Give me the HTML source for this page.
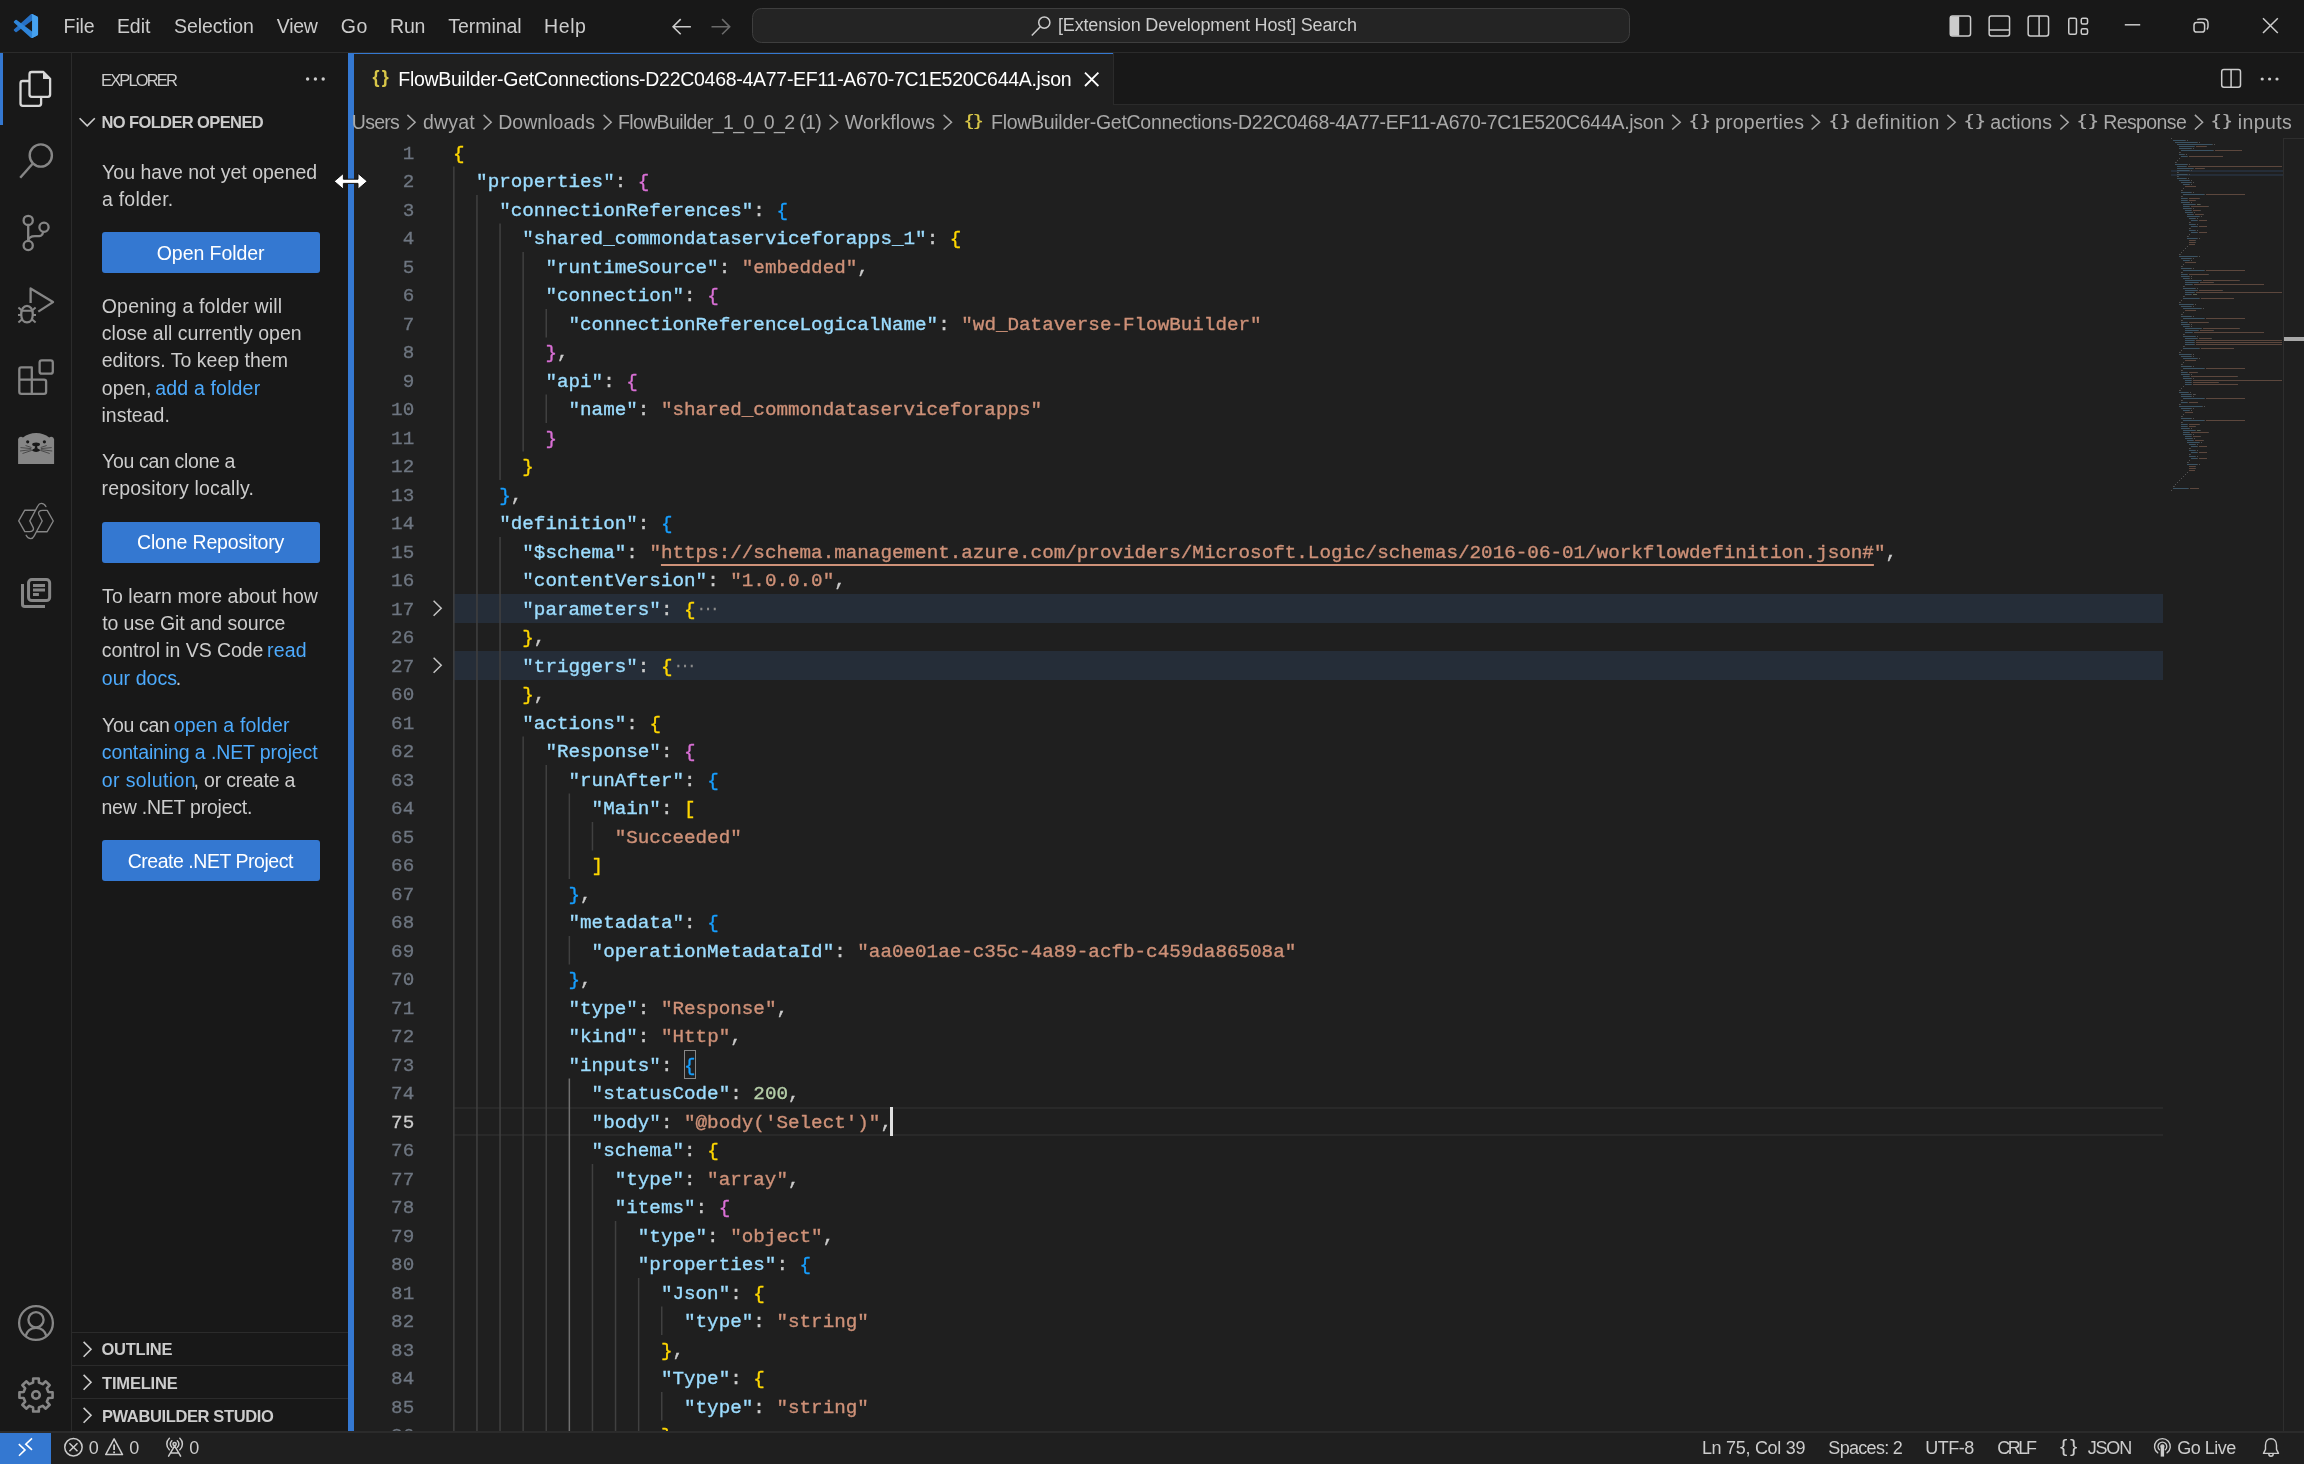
<!DOCTYPE html>
<html lang="en"><head><meta charset="utf-8"><title>FlowBuilder-GetConnections - Visual Studio Code</title>
<style>
html,body{margin:0;padding:0;}
body{width:2304px;height:1464px;overflow:hidden;background:#1f1f1f;position:relative;font-family:'Liberation Sans', sans-serif;}
#app{position:absolute;left:0;top:0;width:2304px;height:1464px;overflow:hidden;will-change:transform;}
#app>div,#app>span,#app>svg{position:absolute;}
#app>span{white-space:pre;}
#ed>div,#ed>span{position:absolute;}
#mm>i{position:absolute;display:block;height:1.2px;}
#ed>span{white-space:pre;font:400 19.25px/28.5px 'Liberation Mono', monospace;-webkit-text-stroke:0.36px currentColor;}
#ed .ln{left:354px;width:60.2px;text-align:right;-webkit-text-stroke:0.3px currentColor;}
#ed .u{color:#ce9178;text-decoration:underline;text-decoration-thickness:1.5px;text-underline-offset:6px;}
#ed .fd{color:#8a8a8a;font:19.5px/1 'DejaVu Sans', sans-serif;margin-left:2.7px;-webkit-text-stroke:0;}
</style></head>
<body><div id="app">
<div style="left:0px;top:0px;width:2304px;height:52px;background:#181818;"></div>
<div style="left:0px;top:52px;width:2304px;height:1px;background:#2b2b2b;"></div>
<div style="left:0px;top:53px;width:72px;height:1378px;background:#181818;"></div>
<div style="left:71px;top:53px;width:1px;height:1378px;background:#2b2b2b;"></div>
<div style="left:72px;top:53px;width:276px;height:1378px;background:#181818;"></div>
<div style="left:354px;top:53px;width:1950px;height:52px;background:#181818;"></div>
<div style="left:354px;top:104px;width:1950px;height:1px;background:#2b2b2b;"></div>
<div style="left:0px;top:1431px;width:2304px;height:33px;background:#1f1f1f;"></div>
<div style="left:0px;top:1431px;width:2304px;height:2px;background:#2b2b2b;"></div>
<div style="left:752px;top:8px;width:878px;height:35px;box-sizing:border-box;background:#242424;border:1px solid #3e3e3e;border-radius:9.5px;"></div>
<div style="left:0px;top:53px;width:3px;height:72px;background:#3478d1;"></div>
<div style="left:102px;top:232px;width:218px;height:41px;background:#3478d1;border-radius:3px;"></div>
<div style="left:102px;top:522px;width:218px;height:41px;background:#3478d1;border-radius:3px;"></div>
<div style="left:102px;top:840px;width:218px;height:41px;background:#3478d1;border-radius:3px;"></div>
<div style="left:72px;top:1332px;width:276px;height:1px;background:#2b2b2b;"></div>
<div style="left:72px;top:1365px;width:276px;height:1px;background:#2b2b2b;"></div>
<div style="left:72px;top:1398px;width:276px;height:1px;background:#2b2b2b;"></div>
<div style="left:348px;top:53px;width:6px;height:1378px;background:#3478d1;"></div>
<div style="left:354px;top:53px;width:760px;height:52px;background:#1f1f1f;"></div>
<div style="left:1113px;top:53px;width:1px;height:52px;background:#2b2b2b;"></div>
<div style="left:354px;top:53px;width:759px;height:1px;background:#3478d1;"></div>
<div id="ed" style="left:0;top:138px;width:2304px;height:1293px;overflow:hidden;"><span class="ln" style="top:1.75px;color:#6e7681">1</span><span class="cl" style="left:453.00px;top:1.75px"><span style="color:#ffd700">{</span></span><span class="ln" style="top:30.25px;color:#6e7681">2</span><span class="cl" style="left:476.10px;top:30.25px"><span style="color:#9cdcfe">"properties"</span><span style="color:#cccccc">: </span><span style="color:#da70d6">{</span></span><span class="ln" style="top:58.75px;color:#6e7681">3</span><span class="cl" style="left:499.20px;top:58.75px"><span style="color:#9cdcfe">"connectionReferences"</span><span style="color:#cccccc">: </span><span style="color:#179fff">{</span></span><span class="ln" style="top:87.25px;color:#6e7681">4</span><span class="cl" style="left:522.30px;top:87.25px"><span style="color:#9cdcfe">"shared_commondataserviceforapps_1"</span><span style="color:#cccccc">: </span><span style="color:#ffd700">{</span></span><span class="ln" style="top:115.75px;color:#6e7681">5</span><span class="cl" style="left:545.40px;top:115.75px"><span style="color:#9cdcfe">"runtimeSource"</span><span style="color:#cccccc">: </span><span style="color:#ce9178">"embedded"</span><span style="color:#cccccc">,</span></span><span class="ln" style="top:144.25px;color:#6e7681">6</span><span class="cl" style="left:545.40px;top:144.25px"><span style="color:#9cdcfe">"connection"</span><span style="color:#cccccc">: </span><span style="color:#da70d6">{</span></span><span class="ln" style="top:172.75px;color:#6e7681">7</span><span class="cl" style="left:568.50px;top:172.75px"><span style="color:#9cdcfe">"connectionReferenceLogicalName"</span><span style="color:#cccccc">: </span><span style="color:#ce9178">"wd_Dataverse-FlowBuilder"</span></span><span class="ln" style="top:201.25px;color:#6e7681">8</span><span class="cl" style="left:545.40px;top:201.25px"><span style="color:#da70d6">}</span><span style="color:#cccccc">,</span></span><span class="ln" style="top:229.75px;color:#6e7681">9</span><span class="cl" style="left:545.40px;top:229.75px"><span style="color:#9cdcfe">"api"</span><span style="color:#cccccc">: </span><span style="color:#da70d6">{</span></span><span class="ln" style="top:258.25px;color:#6e7681">10</span><span class="cl" style="left:568.50px;top:258.25px"><span style="color:#9cdcfe">"name"</span><span style="color:#cccccc">: </span><span style="color:#ce9178">"shared_commondataserviceforapps"</span></span><span class="ln" style="top:286.75px;color:#6e7681">11</span><span class="cl" style="left:545.40px;top:286.75px"><span style="color:#da70d6">}</span></span><span class="ln" style="top:315.25px;color:#6e7681">12</span><span class="cl" style="left:522.30px;top:315.25px"><span style="color:#ffd700">}</span></span><span class="ln" style="top:343.75px;color:#6e7681">13</span><span class="cl" style="left:499.20px;top:343.75px"><span style="color:#179fff">}</span><span style="color:#cccccc">,</span></span><span class="ln" style="top:372.25px;color:#6e7681">14</span><span class="cl" style="left:499.20px;top:372.25px"><span style="color:#9cdcfe">"definition"</span><span style="color:#cccccc">: </span><span style="color:#179fff">{</span></span><span class="ln" style="top:400.75px;color:#6e7681">15</span><span class="cl" style="left:522.30px;top:400.75px"><span style="color:#9cdcfe">"$schema"</span><span style="color:#cccccc">: </span><span style="color:#ce9178">"</span><span class="u">https://schema.management.azure.com/providers/Microsoft.Logic/schemas/2016-06-01/workflowdefinition.json#</span><span style="color:#ce9178">"</span><span style="color:#cccccc">,</span></span><span class="ln" style="top:429.25px;color:#6e7681">16</span><span class="cl" style="left:522.30px;top:429.25px"><span style="color:#9cdcfe">"contentVersion"</span><span style="color:#cccccc">: </span><span style="color:#ce9178">"1.0.0.0"</span><span style="color:#cccccc">,</span></span><div style="left:453px;top:456px;width:1710px;height:28.5px;background:#252d38;"></div><span class="ln" style="top:457.75px;color:#6e7681">17</span><span class="cl" style="left:522.30px;top:457.75px"><span style="color:#9cdcfe">"parameters"</span><span style="color:#cccccc">: </span><span style="color:#ffd700">{</span><span class="fd">⋯</span></span><span class="ln" style="top:486.25px;color:#6e7681">26</span><span class="cl" style="left:522.30px;top:486.25px"><span style="color:#ffd700">}</span><span style="color:#cccccc">,</span></span><div style="left:453px;top:513px;width:1710px;height:28.5px;background:#252d38;"></div><span class="ln" style="top:514.75px;color:#6e7681">27</span><span class="cl" style="left:522.30px;top:514.75px"><span style="color:#9cdcfe">"triggers"</span><span style="color:#cccccc">: </span><span style="color:#ffd700">{</span><span class="fd">⋯</span></span><span class="ln" style="top:543.25px;color:#6e7681">60</span><span class="cl" style="left:522.30px;top:543.25px"><span style="color:#ffd700">}</span><span style="color:#cccccc">,</span></span><span class="ln" style="top:571.75px;color:#6e7681">61</span><span class="cl" style="left:522.30px;top:571.75px"><span style="color:#9cdcfe">"actions"</span><span style="color:#cccccc">: </span><span style="color:#ffd700">{</span></span><span class="ln" style="top:600.25px;color:#6e7681">62</span><span class="cl" style="left:545.40px;top:600.25px"><span style="color:#9cdcfe">"Response"</span><span style="color:#cccccc">: </span><span style="color:#da70d6">{</span></span><span class="ln" style="top:628.75px;color:#6e7681">63</span><span class="cl" style="left:568.50px;top:628.75px"><span style="color:#9cdcfe">"runAfter"</span><span style="color:#cccccc">: </span><span style="color:#179fff">{</span></span><span class="ln" style="top:657.25px;color:#6e7681">64</span><span class="cl" style="left:591.60px;top:657.25px"><span style="color:#9cdcfe">"Main"</span><span style="color:#cccccc">: </span><span style="color:#ffd700">[</span></span><span class="ln" style="top:685.75px;color:#6e7681">65</span><span class="cl" style="left:614.70px;top:685.75px"><span style="color:#ce9178">"Succeeded"</span></span><span class="ln" style="top:714.25px;color:#6e7681">66</span><span class="cl" style="left:591.60px;top:714.25px"><span style="color:#ffd700">]</span></span><span class="ln" style="top:742.75px;color:#6e7681">67</span><span class="cl" style="left:568.50px;top:742.75px"><span style="color:#179fff">}</span><span style="color:#cccccc">,</span></span><span class="ln" style="top:771.25px;color:#6e7681">68</span><span class="cl" style="left:568.50px;top:771.25px"><span style="color:#9cdcfe">"metadata"</span><span style="color:#cccccc">: </span><span style="color:#179fff">{</span></span><span class="ln" style="top:799.75px;color:#6e7681">69</span><span class="cl" style="left:591.60px;top:799.75px"><span style="color:#9cdcfe">"operationMetadataId"</span><span style="color:#cccccc">: </span><span style="color:#ce9178">"aa0e01ae-c35c-4a89-acfb-c459da86508a"</span></span><span class="ln" style="top:828.25px;color:#6e7681">70</span><span class="cl" style="left:568.50px;top:828.25px"><span style="color:#179fff">}</span><span style="color:#cccccc">,</span></span><span class="ln" style="top:856.75px;color:#6e7681">71</span><span class="cl" style="left:568.50px;top:856.75px"><span style="color:#9cdcfe">"type"</span><span style="color:#cccccc">: </span><span style="color:#ce9178">"Response"</span><span style="color:#cccccc">,</span></span><span class="ln" style="top:885.25px;color:#6e7681">72</span><span class="cl" style="left:568.50px;top:885.25px"><span style="color:#9cdcfe">"kind"</span><span style="color:#cccccc">: </span><span style="color:#ce9178">"Http"</span><span style="color:#cccccc">,</span></span><span class="ln" style="top:913.75px;color:#6e7681">73</span><span class="cl" style="left:568.50px;top:913.75px"><span style="color:#9cdcfe">"inputs"</span><span style="color:#cccccc">: </span><span style="color:#179fff">{</span></span><span class="ln" style="top:942.25px;color:#6e7681">74</span><span class="cl" style="left:591.60px;top:942.25px"><span style="color:#9cdcfe">"statusCode"</span><span style="color:#cccccc">: </span><span style="color:#b5cea8">200</span><span style="color:#cccccc">,</span></span><div style="left:453px;top:969px;width:1710px;height:28.5px;box-sizing:border-box;border-top:2.7px solid #292929;border-bottom:2.7px solid #292929;"></div><span class="ln" style="top:970.75px;color:#cccccc">75</span><span class="cl" style="left:591.60px;top:970.75px"><span style="color:#9cdcfe">"body"</span><span style="color:#cccccc">: </span><span style="color:#ce9178">"@body('Select')"</span><span style="color:#cccccc">,</span></span><span class="ln" style="top:999.25px;color:#6e7681">76</span><span class="cl" style="left:591.60px;top:999.25px"><span style="color:#9cdcfe">"schema"</span><span style="color:#cccccc">: </span><span style="color:#ffd700">{</span></span><span class="ln" style="top:1027.75px;color:#6e7681">77</span><span class="cl" style="left:614.70px;top:1027.75px"><span style="color:#9cdcfe">"type"</span><span style="color:#cccccc">: </span><span style="color:#ce9178">"array"</span><span style="color:#cccccc">,</span></span><span class="ln" style="top:1056.25px;color:#6e7681">78</span><span class="cl" style="left:614.70px;top:1056.25px"><span style="color:#9cdcfe">"items"</span><span style="color:#cccccc">: </span><span style="color:#da70d6">{</span></span><span class="ln" style="top:1084.75px;color:#6e7681">79</span><span class="cl" style="left:637.80px;top:1084.75px"><span style="color:#9cdcfe">"type"</span><span style="color:#cccccc">: </span><span style="color:#ce9178">"object"</span><span style="color:#cccccc">,</span></span><span class="ln" style="top:1113.25px;color:#6e7681">80</span><span class="cl" style="left:637.80px;top:1113.25px"><span style="color:#9cdcfe">"properties"</span><span style="color:#cccccc">: </span><span style="color:#179fff">{</span></span><span class="ln" style="top:1141.75px;color:#6e7681">81</span><span class="cl" style="left:660.90px;top:1141.75px"><span style="color:#9cdcfe">"Json"</span><span style="color:#cccccc">: </span><span style="color:#ffd700">{</span></span><span class="ln" style="top:1170.25px;color:#6e7681">82</span><span class="cl" style="left:684.00px;top:1170.25px"><span style="color:#9cdcfe">"type"</span><span style="color:#cccccc">: </span><span style="color:#ce9178">"string"</span></span><span class="ln" style="top:1198.75px;color:#6e7681">83</span><span class="cl" style="left:660.90px;top:1198.75px"><span style="color:#ffd700">}</span><span style="color:#cccccc">,</span></span><span class="ln" style="top:1227.25px;color:#6e7681">84</span><span class="cl" style="left:660.90px;top:1227.25px"><span style="color:#9cdcfe">"Type"</span><span style="color:#cccccc">: </span><span style="color:#ffd700">{</span></span><span class="ln" style="top:1255.75px;color:#6e7681">85</span><span class="cl" style="left:684.00px;top:1255.75px"><span style="color:#9cdcfe">"type"</span><span style="color:#cccccc">: </span><span style="color:#ce9178">"string"</span></span><span class="ln" style="top:1284.25px;color:#6e7681">86</span><span class="cl" style="left:660.90px;top:1284.25px"><span style="color:#ffd700">}</span><span style="color:#cccccc">,</span></span><div style="left:683.70px;top:912.00px;width:11.95px;height:28.5px;box-sizing:border-box;border:1.5px solid #888888;"></div><div style="left:890.20px;top:969.00px;width:3px;height:28.5px;background:#e0e0e0;"></div></div>
<div style="left:2283px;top:138px;width:1.2px;height:1293px;background:#2e2e2e;"></div>
<div style="left:2283px;top:138px;width:21px;height:1.2px;background:#2e2e2e;"></div>
<div style="left:2284px;top:337px;width:20px;height:3.5px;background:#a8a8a8;"></div>
<div id="mm" style="left:2170.6px;top:138px;width:112.4px;height:356px;overflow:hidden;"><i style="left:0.0px;top:0.3px;width:1.0px;background:#505050"></i><i style="left:2.0px;top:2.3px;width:12.2px;background:#3b5363"></i><i style="left:14.3px;top:2.3px;width:1.0px;background:#444444"></i><i style="left:16.3px;top:2.3px;width:1.0px;background:#505050"></i><i style="left:4.1px;top:4.3px;width:22.4px;background:#3b5363"></i><i style="left:26.5px;top:4.3px;width:1.0px;background:#444444"></i><i style="left:28.6px;top:4.3px;width:1.0px;background:#505050"></i><i style="left:6.1px;top:6.3px;width:35.7px;background:#3b5363"></i><i style="left:41.8px;top:6.3px;width:1.0px;background:#444444"></i><i style="left:43.9px;top:6.3px;width:1.0px;background:#505050"></i><i style="left:8.2px;top:8.3px;width:15.3px;background:#3b5363"></i><i style="left:23.5px;top:8.3px;width:1.0px;background:#444444"></i><i style="left:25.5px;top:8.3px;width:10.2px;background:#5c473d"></i><i style="left:35.7px;top:8.3px;width:1.0px;background:#444444"></i><i style="left:8.2px;top:10.3px;width:12.2px;background:#3b5363"></i><i style="left:20.4px;top:10.3px;width:1.0px;background:#444444"></i><i style="left:22.4px;top:10.3px;width:1.0px;background:#505050"></i><i style="left:10.2px;top:12.3px;width:32.6px;background:#3b5363"></i><i style="left:42.8px;top:12.3px;width:1.0px;background:#444444"></i><i style="left:44.9px;top:12.3px;width:26.5px;background:#5c473d"></i><i style="left:8.2px;top:14.3px;width:1.0px;background:#505050"></i><i style="left:9.2px;top:14.3px;width:1.0px;background:#444444"></i><i style="left:8.2px;top:16.3px;width:5.1px;background:#3b5363"></i><i style="left:13.3px;top:16.3px;width:1.0px;background:#444444"></i><i style="left:15.3px;top:16.3px;width:1.0px;background:#505050"></i><i style="left:10.2px;top:18.3px;width:6.1px;background:#3b5363"></i><i style="left:16.3px;top:18.3px;width:1.0px;background:#444444"></i><i style="left:18.4px;top:18.3px;width:33.7px;background:#5c473d"></i><i style="left:8.2px;top:20.3px;width:1.0px;background:#505050"></i><i style="left:6.1px;top:22.3px;width:1.0px;background:#505050"></i><i style="left:4.1px;top:24.3px;width:1.0px;background:#505050"></i><i style="left:5.1px;top:24.3px;width:1.0px;background:#444444"></i><i style="left:4.1px;top:26.3px;width:12.2px;background:#3b5363"></i><i style="left:16.3px;top:26.3px;width:1.0px;background:#444444"></i><i style="left:18.4px;top:26.3px;width:1.0px;background:#505050"></i><i style="left:6.1px;top:28.3px;width:9.2px;background:#3b5363"></i><i style="left:15.3px;top:28.3px;width:1.0px;background:#444444"></i><i style="left:17.3px;top:28.3px;width:1.0px;background:#5c473d"></i><i style="left:18.4px;top:28.3px;width:93.4px;background:#5c473d"></i><i style="left:6.1px;top:30.3px;width:16.3px;background:#3b5363"></i><i style="left:22.4px;top:30.3px;width:1.0px;background:#444444"></i><i style="left:24.5px;top:30.3px;width:9.2px;background:#5c473d"></i><i style="left:33.7px;top:30.3px;width:1.0px;background:#444444"></i><i style="left:0;top:32px;width:112.4px;height:2px;background:#252d38"></i><i style="left:6.1px;top:32.3px;width:12.2px;background:#3b5363"></i><i style="left:18.4px;top:32.3px;width:1.0px;background:#444444"></i><i style="left:20.4px;top:32.3px;width:1.0px;background:#505050"></i><i style="left:6.1px;top:34.3px;width:1.0px;background:#505050"></i><i style="left:7.1px;top:34.3px;width:1.0px;background:#444444"></i><i style="left:0;top:36px;width:112.4px;height:2px;background:#252d38"></i><i style="left:6.1px;top:36.3px;width:10.2px;background:#3b5363"></i><i style="left:16.3px;top:36.3px;width:1.0px;background:#444444"></i><i style="left:18.4px;top:36.3px;width:1.0px;background:#505050"></i><i style="left:6.1px;top:38.3px;width:1.0px;background:#505050"></i><i style="left:7.1px;top:38.3px;width:1.0px;background:#444444"></i><i style="left:6.1px;top:40.3px;width:9.2px;background:#3b5363"></i><i style="left:15.3px;top:40.3px;width:1.0px;background:#444444"></i><i style="left:17.3px;top:40.3px;width:1.0px;background:#505050"></i><i style="left:8.2px;top:42.3px;width:10.2px;background:#3b5363"></i><i style="left:18.4px;top:42.3px;width:1.0px;background:#444444"></i><i style="left:20.4px;top:42.3px;width:1.0px;background:#505050"></i><i style="left:10.2px;top:44.3px;width:10.2px;background:#3b5363"></i><i style="left:20.4px;top:44.3px;width:1.0px;background:#444444"></i><i style="left:22.4px;top:44.3px;width:1.0px;background:#505050"></i><i style="left:12.2px;top:46.3px;width:6.1px;background:#3b5363"></i><i style="left:18.4px;top:46.3px;width:1.0px;background:#444444"></i><i style="left:20.4px;top:46.3px;width:1.0px;background:#505050"></i><i style="left:14.3px;top:48.3px;width:11.2px;background:#5c473d"></i><i style="left:12.2px;top:50.3px;width:1.0px;background:#505050"></i><i style="left:10.2px;top:52.3px;width:1.0px;background:#505050"></i><i style="left:11.2px;top:52.3px;width:1.0px;background:#444444"></i><i style="left:10.2px;top:54.3px;width:10.2px;background:#3b5363"></i><i style="left:20.4px;top:54.3px;width:1.0px;background:#444444"></i><i style="left:22.4px;top:54.3px;width:1.0px;background:#505050"></i><i style="left:12.2px;top:56.3px;width:21.4px;background:#3b5363"></i><i style="left:33.7px;top:56.3px;width:1.0px;background:#444444"></i><i style="left:35.7px;top:56.3px;width:38.8px;background:#5c473d"></i><i style="left:10.2px;top:58.3px;width:1.0px;background:#505050"></i><i style="left:11.2px;top:58.3px;width:1.0px;background:#444444"></i><i style="left:10.2px;top:60.3px;width:6.1px;background:#3b5363"></i><i style="left:16.3px;top:60.3px;width:1.0px;background:#444444"></i><i style="left:18.4px;top:60.3px;width:10.2px;background:#5c473d"></i><i style="left:28.6px;top:60.3px;width:1.0px;background:#444444"></i><i style="left:10.2px;top:62.3px;width:6.1px;background:#3b5363"></i><i style="left:16.3px;top:62.3px;width:1.0px;background:#444444"></i><i style="left:18.4px;top:62.3px;width:6.1px;background:#5c473d"></i><i style="left:24.5px;top:62.3px;width:1.0px;background:#444444"></i><i style="left:10.2px;top:64.3px;width:8.2px;background:#3b5363"></i><i style="left:18.4px;top:64.3px;width:1.0px;background:#444444"></i><i style="left:20.4px;top:64.3px;width:1.0px;background:#505050"></i><i style="left:12.2px;top:66.3px;width:12.2px;background:#3b5363"></i><i style="left:24.5px;top:66.3px;width:1.0px;background:#444444"></i><i style="left:26.5px;top:66.3px;width:3.1px;background:#566050"></i><i style="left:29.6px;top:66.3px;width:1.0px;background:#444444"></i><i style="left:12.2px;top:68.3px;width:6.1px;background:#3b5363"></i><i style="left:18.4px;top:68.3px;width:1.0px;background:#444444"></i><i style="left:20.4px;top:68.3px;width:17.3px;background:#5c473d"></i><i style="left:37.7px;top:68.3px;width:1.0px;background:#444444"></i><i style="left:12.2px;top:70.3px;width:8.2px;background:#3b5363"></i><i style="left:20.4px;top:70.3px;width:1.0px;background:#444444"></i><i style="left:22.4px;top:70.3px;width:1.0px;background:#505050"></i><i style="left:14.3px;top:72.3px;width:6.1px;background:#3b5363"></i><i style="left:20.4px;top:72.3px;width:1.0px;background:#444444"></i><i style="left:22.4px;top:72.3px;width:7.1px;background:#5c473d"></i><i style="left:29.6px;top:72.3px;width:1.0px;background:#444444"></i><i style="left:14.3px;top:74.3px;width:7.1px;background:#3b5363"></i><i style="left:21.4px;top:74.3px;width:1.0px;background:#444444"></i><i style="left:23.5px;top:74.3px;width:1.0px;background:#505050"></i><i style="left:16.3px;top:76.3px;width:6.1px;background:#3b5363"></i><i style="left:22.4px;top:76.3px;width:1.0px;background:#444444"></i><i style="left:24.5px;top:76.3px;width:8.2px;background:#5c473d"></i><i style="left:32.6px;top:76.3px;width:1.0px;background:#444444"></i><i style="left:16.3px;top:78.3px;width:12.2px;background:#3b5363"></i><i style="left:28.6px;top:78.3px;width:1.0px;background:#444444"></i><i style="left:30.6px;top:78.3px;width:1.0px;background:#505050"></i><i style="left:18.4px;top:80.3px;width:6.1px;background:#3b5363"></i><i style="left:24.5px;top:80.3px;width:1.0px;background:#444444"></i><i style="left:26.5px;top:80.3px;width:1.0px;background:#505050"></i><i style="left:20.4px;top:82.3px;width:6.1px;background:#3b5363"></i><i style="left:26.5px;top:82.3px;width:1.0px;background:#444444"></i><i style="left:28.6px;top:82.3px;width:8.2px;background:#5c473d"></i><i style="left:18.4px;top:84.3px;width:1.0px;background:#505050"></i><i style="left:19.4px;top:84.3px;width:1.0px;background:#444444"></i><i style="left:18.4px;top:86.3px;width:6.1px;background:#3b5363"></i><i style="left:24.5px;top:86.3px;width:1.0px;background:#444444"></i><i style="left:26.5px;top:86.3px;width:1.0px;background:#505050"></i><i style="left:20.4px;top:88.3px;width:6.1px;background:#3b5363"></i><i style="left:26.5px;top:88.3px;width:1.0px;background:#444444"></i><i style="left:28.6px;top:88.3px;width:8.2px;background:#5c473d"></i><i style="left:18.4px;top:90.3px;width:1.0px;background:#505050"></i><i style="left:19.4px;top:90.3px;width:1.0px;background:#444444"></i><i style="left:18.4px;top:92.3px;width:6.1px;background:#3b5363"></i><i style="left:24.5px;top:92.3px;width:1.0px;background:#444444"></i><i style="left:26.5px;top:92.3px;width:1.0px;background:#505050"></i><i style="left:20.4px;top:94.3px;width:6.1px;background:#3b5363"></i><i style="left:26.5px;top:94.3px;width:1.0px;background:#444444"></i><i style="left:28.6px;top:94.3px;width:8.2px;background:#5c473d"></i><i style="left:18.4px;top:96.3px;width:1.0px;background:#505050"></i><i style="left:16.3px;top:98.3px;width:1.0px;background:#505050"></i><i style="left:17.3px;top:98.3px;width:1.0px;background:#444444"></i><i style="left:16.3px;top:100.3px;width:10.2px;background:#3b5363"></i><i style="left:26.5px;top:100.3px;width:1.0px;background:#444444"></i><i style="left:28.6px;top:100.3px;width:1.0px;background:#505050"></i><i style="left:18.4px;top:102.3px;width:6.1px;background:#5c473d"></i><i style="left:24.5px;top:102.3px;width:1.0px;background:#444444"></i><i style="left:18.4px;top:104.3px;width:6.1px;background:#5c473d"></i><i style="left:24.5px;top:104.3px;width:1.0px;background:#444444"></i><i style="left:18.4px;top:106.3px;width:6.1px;background:#5c473d"></i><i style="left:16.3px;top:108.3px;width:1.0px;background:#505050"></i><i style="left:14.3px;top:110.3px;width:1.0px;background:#505050"></i><i style="left:12.2px;top:112.3px;width:1.0px;background:#505050"></i><i style="left:10.2px;top:114.3px;width:1.0px;background:#505050"></i><i style="left:8.2px;top:116.3px;width:1.0px;background:#505050"></i><i style="left:9.2px;top:116.3px;width:1.0px;background:#444444"></i><i style="left:8.2px;top:118.3px;width:18.4px;background:#3b5363"></i><i style="left:26.5px;top:118.3px;width:1.0px;background:#444444"></i><i style="left:28.6px;top:118.3px;width:1.0px;background:#505050"></i><i style="left:10.2px;top:120.3px;width:10.2px;background:#3b5363"></i><i style="left:20.4px;top:120.3px;width:1.0px;background:#444444"></i><i style="left:22.4px;top:120.3px;width:1.0px;background:#505050"></i><i style="left:12.2px;top:122.3px;width:6.1px;background:#3b5363"></i><i style="left:18.4px;top:122.3px;width:1.0px;background:#444444"></i><i style="left:20.4px;top:122.3px;width:1.0px;background:#505050"></i><i style="left:14.3px;top:124.3px;width:11.2px;background:#5c473d"></i><i style="left:12.2px;top:126.3px;width:1.0px;background:#505050"></i><i style="left:10.2px;top:128.3px;width:1.0px;background:#505050"></i><i style="left:11.2px;top:128.3px;width:1.0px;background:#444444"></i><i style="left:10.2px;top:130.3px;width:10.2px;background:#3b5363"></i><i style="left:20.4px;top:130.3px;width:1.0px;background:#444444"></i><i style="left:22.4px;top:130.3px;width:1.0px;background:#505050"></i><i style="left:12.2px;top:132.3px;width:21.4px;background:#3b5363"></i><i style="left:33.7px;top:132.3px;width:1.0px;background:#444444"></i><i style="left:35.7px;top:132.3px;width:38.8px;background:#5c473d"></i><i style="left:10.2px;top:134.3px;width:1.0px;background:#505050"></i><i style="left:11.2px;top:134.3px;width:1.0px;background:#444444"></i><i style="left:10.2px;top:136.3px;width:6.1px;background:#3b5363"></i><i style="left:16.3px;top:136.3px;width:1.0px;background:#444444"></i><i style="left:18.4px;top:136.3px;width:19.4px;background:#5c473d"></i><i style="left:37.7px;top:136.3px;width:1.0px;background:#444444"></i><i style="left:10.2px;top:138.3px;width:8.2px;background:#3b5363"></i><i style="left:18.4px;top:138.3px;width:1.0px;background:#444444"></i><i style="left:20.4px;top:138.3px;width:1.0px;background:#505050"></i><i style="left:12.2px;top:140.3px;width:6.1px;background:#3b5363"></i><i style="left:18.4px;top:140.3px;width:1.0px;background:#444444"></i><i style="left:20.4px;top:140.3px;width:1.0px;background:#505050"></i><i style="left:14.3px;top:142.3px;width:16.3px;background:#3b5363"></i><i style="left:30.6px;top:142.3px;width:1.0px;background:#444444"></i><i style="left:32.6px;top:142.3px;width:35.7px;background:#5c473d"></i><i style="left:68.3px;top:142.3px;width:1.0px;background:#444444"></i><i style="left:14.3px;top:144.3px;width:13.3px;background:#3b5363"></i><i style="left:27.5px;top:144.3px;width:1.0px;background:#444444"></i><i style="left:29.6px;top:144.3px;width:13.3px;background:#5c473d"></i><i style="left:42.8px;top:144.3px;width:1.0px;background:#444444"></i><i style="left:14.3px;top:146.3px;width:7.1px;background:#3b5363"></i><i style="left:21.4px;top:146.3px;width:1.0px;background:#444444"></i><i style="left:23.5px;top:146.3px;width:70.4px;background:#5c473d"></i><i style="left:12.2px;top:148.3px;width:1.0px;background:#505050"></i><i style="left:13.3px;top:148.3px;width:1.0px;background:#444444"></i><i style="left:12.2px;top:150.3px;width:12.2px;background:#3b5363"></i><i style="left:24.5px;top:150.3px;width:1.0px;background:#444444"></i><i style="left:26.5px;top:150.3px;width:1.0px;background:#505050"></i><i style="left:14.3px;top:152.3px;width:12.2px;background:#3b5363"></i><i style="left:26.5px;top:152.3px;width:1.0px;background:#444444"></i><i style="left:28.6px;top:152.3px;width:22.4px;background:#5c473d"></i><i style="left:51.0px;top:152.3px;width:1.0px;background:#444444"></i><i style="left:14.3px;top:154.3px;width:9.2px;background:#3b5363"></i><i style="left:23.5px;top:154.3px;width:1.0px;background:#444444"></i><i style="left:25.5px;top:154.3px;width:86.3px;background:#5c473d"></i><i style="left:14.3px;top:156.3px;width:6.1px;background:#3b5363"></i><i style="left:20.4px;top:156.3px;width:1.0px;background:#444444"></i><i style="left:22.4px;top:156.3px;width:4.1px;background:#566050"></i><i style="left:12.2px;top:158.3px;width:1.0px;background:#505050"></i><i style="left:13.3px;top:158.3px;width:1.0px;background:#444444"></i><i style="left:12.2px;top:160.3px;width:16.3px;background:#3b5363"></i><i style="left:28.6px;top:160.3px;width:1.0px;background:#444444"></i><i style="left:30.6px;top:160.3px;width:32.6px;background:#5c473d"></i><i style="left:10.2px;top:162.3px;width:1.0px;background:#505050"></i><i style="left:8.2px;top:164.3px;width:1.0px;background:#505050"></i><i style="left:9.2px;top:164.3px;width:1.0px;background:#444444"></i><i style="left:8.2px;top:166.3px;width:14.3px;background:#3b5363"></i><i style="left:22.4px;top:166.3px;width:1.0px;background:#444444"></i><i style="left:24.5px;top:166.3px;width:1.0px;background:#505050"></i><i style="left:10.2px;top:168.3px;width:10.2px;background:#3b5363"></i><i style="left:20.4px;top:168.3px;width:1.0px;background:#444444"></i><i style="left:22.4px;top:168.3px;width:1.0px;background:#505050"></i><i style="left:12.2px;top:170.3px;width:18.4px;background:#3b5363"></i><i style="left:30.6px;top:170.3px;width:1.0px;background:#444444"></i><i style="left:32.6px;top:170.3px;width:1.0px;background:#505050"></i><i style="left:14.3px;top:172.3px;width:11.2px;background:#5c473d"></i><i style="left:12.2px;top:174.3px;width:1.0px;background:#505050"></i><i style="left:10.2px;top:176.3px;width:1.0px;background:#505050"></i><i style="left:11.2px;top:176.3px;width:1.0px;background:#444444"></i><i style="left:10.2px;top:178.3px;width:10.2px;background:#3b5363"></i><i style="left:20.4px;top:178.3px;width:1.0px;background:#444444"></i><i style="left:22.4px;top:178.3px;width:1.0px;background:#505050"></i><i style="left:12.2px;top:180.3px;width:21.4px;background:#3b5363"></i><i style="left:33.7px;top:180.3px;width:1.0px;background:#444444"></i><i style="left:35.7px;top:180.3px;width:38.8px;background:#5c473d"></i><i style="left:10.2px;top:182.3px;width:1.0px;background:#505050"></i><i style="left:11.2px;top:182.3px;width:1.0px;background:#444444"></i><i style="left:10.2px;top:184.3px;width:6.1px;background:#3b5363"></i><i style="left:16.3px;top:184.3px;width:1.0px;background:#444444"></i><i style="left:18.4px;top:184.3px;width:19.4px;background:#5c473d"></i><i style="left:37.7px;top:184.3px;width:1.0px;background:#444444"></i><i style="left:10.2px;top:186.3px;width:8.2px;background:#3b5363"></i><i style="left:18.4px;top:186.3px;width:1.0px;background:#444444"></i><i style="left:20.4px;top:186.3px;width:1.0px;background:#505050"></i><i style="left:12.2px;top:188.3px;width:6.1px;background:#3b5363"></i><i style="left:18.4px;top:188.3px;width:1.0px;background:#444444"></i><i style="left:20.4px;top:188.3px;width:1.0px;background:#505050"></i><i style="left:14.3px;top:190.3px;width:16.3px;background:#3b5363"></i><i style="left:30.6px;top:190.3px;width:1.0px;background:#444444"></i><i style="left:32.6px;top:190.3px;width:35.7px;background:#5c473d"></i><i style="left:68.3px;top:190.3px;width:1.0px;background:#444444"></i><i style="left:14.3px;top:192.3px;width:13.3px;background:#3b5363"></i><i style="left:27.5px;top:192.3px;width:1.0px;background:#444444"></i><i style="left:29.6px;top:192.3px;width:13.3px;background:#5c473d"></i><i style="left:42.8px;top:192.3px;width:1.0px;background:#444444"></i><i style="left:14.3px;top:194.3px;width:7.1px;background:#3b5363"></i><i style="left:21.4px;top:194.3px;width:1.0px;background:#444444"></i><i style="left:23.5px;top:194.3px;width:70.4px;background:#5c473d"></i><i style="left:12.2px;top:196.3px;width:1.0px;background:#505050"></i><i style="left:13.3px;top:196.3px;width:1.0px;background:#444444"></i><i style="left:12.2px;top:198.3px;width:12.2px;background:#3b5363"></i><i style="left:24.5px;top:198.3px;width:1.0px;background:#444444"></i><i style="left:26.5px;top:198.3px;width:1.0px;background:#505050"></i><i style="left:14.3px;top:200.3px;width:12.2px;background:#3b5363"></i><i style="left:26.5px;top:200.3px;width:1.0px;background:#444444"></i><i style="left:28.6px;top:200.3px;width:12.2px;background:#5c473d"></i><i style="left:40.8px;top:200.3px;width:1.0px;background:#444444"></i><i style="left:14.3px;top:202.3px;width:9.2px;background:#3b5363"></i><i style="left:23.5px;top:202.3px;width:1.0px;background:#444444"></i><i style="left:25.5px;top:202.3px;width:86.3px;background:#5c473d"></i><i style="left:14.3px;top:204.3px;width:9.2px;background:#3b5363"></i><i style="left:23.5px;top:204.3px;width:1.0px;background:#444444"></i><i style="left:25.5px;top:204.3px;width:86.3px;background:#5c473d"></i><i style="left:14.3px;top:206.3px;width:9.2px;background:#3b5363"></i><i style="left:23.5px;top:206.3px;width:1.0px;background:#444444"></i><i style="left:25.5px;top:206.3px;width:85.7px;background:#5c473d"></i><i style="left:12.2px;top:208.3px;width:1.0px;background:#505050"></i><i style="left:13.3px;top:208.3px;width:1.0px;background:#444444"></i><i style="left:12.2px;top:210.3px;width:16.3px;background:#3b5363"></i><i style="left:28.6px;top:210.3px;width:1.0px;background:#444444"></i><i style="left:30.6px;top:210.3px;width:32.6px;background:#5c473d"></i><i style="left:10.2px;top:212.3px;width:1.0px;background:#505050"></i><i style="left:8.2px;top:214.3px;width:1.0px;background:#505050"></i><i style="left:9.2px;top:214.3px;width:1.0px;background:#444444"></i><i style="left:8.2px;top:216.3px;width:12.2px;background:#3b5363"></i><i style="left:20.4px;top:216.3px;width:1.0px;background:#444444"></i><i style="left:22.4px;top:216.3px;width:1.0px;background:#505050"></i><i style="left:10.2px;top:218.3px;width:10.2px;background:#3b5363"></i><i style="left:20.4px;top:218.3px;width:1.0px;background:#444444"></i><i style="left:22.4px;top:218.3px;width:1.0px;background:#505050"></i><i style="left:12.2px;top:220.3px;width:14.3px;background:#3b5363"></i><i style="left:26.5px;top:220.3px;width:1.0px;background:#444444"></i><i style="left:28.6px;top:220.3px;width:1.0px;background:#505050"></i><i style="left:14.3px;top:222.3px;width:11.2px;background:#5c473d"></i><i style="left:12.2px;top:224.3px;width:1.0px;background:#505050"></i><i style="left:10.2px;top:226.3px;width:1.0px;background:#505050"></i><i style="left:11.2px;top:226.3px;width:1.0px;background:#444444"></i><i style="left:10.2px;top:228.3px;width:10.2px;background:#3b5363"></i><i style="left:20.4px;top:228.3px;width:1.0px;background:#444444"></i><i style="left:22.4px;top:228.3px;width:1.0px;background:#505050"></i><i style="left:12.2px;top:230.3px;width:21.4px;background:#3b5363"></i><i style="left:33.7px;top:230.3px;width:1.0px;background:#444444"></i><i style="left:35.7px;top:230.3px;width:38.8px;background:#5c473d"></i><i style="left:10.2px;top:232.3px;width:1.0px;background:#505050"></i><i style="left:11.2px;top:232.3px;width:1.0px;background:#444444"></i><i style="left:10.2px;top:234.3px;width:6.1px;background:#3b5363"></i><i style="left:16.3px;top:234.3px;width:1.0px;background:#444444"></i><i style="left:18.4px;top:234.3px;width:8.2px;background:#5c473d"></i><i style="left:26.5px;top:234.3px;width:1.0px;background:#444444"></i><i style="left:10.2px;top:236.3px;width:8.2px;background:#3b5363"></i><i style="left:18.4px;top:236.3px;width:1.0px;background:#444444"></i><i style="left:20.4px;top:236.3px;width:1.0px;background:#505050"></i><i style="left:12.2px;top:238.3px;width:6.1px;background:#3b5363"></i><i style="left:18.4px;top:238.3px;width:1.0px;background:#444444"></i><i style="left:20.4px;top:238.3px;width:45.9px;background:#5c473d"></i><i style="left:66.3px;top:238.3px;width:1.0px;background:#444444"></i><i style="left:12.2px;top:240.3px;width:8.2px;background:#3b5363"></i><i style="left:20.4px;top:240.3px;width:1.0px;background:#444444"></i><i style="left:22.4px;top:240.3px;width:1.0px;background:#505050"></i><i style="left:14.3px;top:242.3px;width:6.1px;background:#3b5363"></i><i style="left:20.4px;top:242.3px;width:1.0px;background:#444444"></i><i style="left:22.4px;top:242.3px;width:89.4px;background:#5c473d"></i><i style="left:14.3px;top:244.3px;width:6.1px;background:#3b5363"></i><i style="left:20.4px;top:244.3px;width:1.0px;background:#444444"></i><i style="left:22.4px;top:244.3px;width:25.5px;background:#5c473d"></i><i style="left:47.9px;top:244.3px;width:1.0px;background:#444444"></i><i style="left:14.3px;top:246.3px;width:6.1px;background:#3b5363"></i><i style="left:20.4px;top:246.3px;width:1.0px;background:#444444"></i><i style="left:22.4px;top:246.3px;width:44.9px;background:#5c473d"></i><i style="left:12.2px;top:248.3px;width:1.0px;background:#505050"></i><i style="left:10.2px;top:250.3px;width:1.0px;background:#505050"></i><i style="left:8.2px;top:252.3px;width:1.0px;background:#505050"></i><i style="left:9.2px;top:252.3px;width:1.0px;background:#444444"></i><i style="left:8.2px;top:254.3px;width:9.2px;background:#3b5363"></i><i style="left:17.3px;top:254.3px;width:1.0px;background:#444444"></i><i style="left:19.4px;top:254.3px;width:1.0px;background:#505050"></i><i style="left:10.2px;top:256.3px;width:10.2px;background:#3b5363"></i><i style="left:20.4px;top:256.3px;width:1.0px;background:#444444"></i><i style="left:22.4px;top:256.3px;width:1.0px;background:#505050"></i><i style="left:23.5px;top:256.3px;width:1.0px;background:#505050"></i><i style="left:24.5px;top:256.3px;width:1.0px;background:#444444"></i><i style="left:10.2px;top:258.3px;width:10.2px;background:#3b5363"></i><i style="left:20.4px;top:258.3px;width:1.0px;background:#444444"></i><i style="left:22.4px;top:258.3px;width:1.0px;background:#505050"></i><i style="left:12.2px;top:260.3px;width:21.4px;background:#3b5363"></i><i style="left:33.7px;top:260.3px;width:1.0px;background:#444444"></i><i style="left:35.7px;top:260.3px;width:38.8px;background:#5c473d"></i><i style="left:10.2px;top:262.3px;width:1.0px;background:#505050"></i><i style="left:11.2px;top:262.3px;width:1.0px;background:#444444"></i><i style="left:10.2px;top:264.3px;width:6.1px;background:#3b5363"></i><i style="left:16.3px;top:264.3px;width:1.0px;background:#444444"></i><i style="left:18.4px;top:264.3px;width:9.2px;background:#5c473d"></i><i style="left:8.2px;top:266.3px;width:1.0px;background:#505050"></i><i style="left:9.2px;top:266.3px;width:1.0px;background:#444444"></i><i style="left:8.2px;top:268.3px;width:23.5px;background:#3b5363"></i><i style="left:31.6px;top:268.3px;width:1.0px;background:#444444"></i><i style="left:33.7px;top:268.3px;width:1.0px;background:#505050"></i><i style="left:10.2px;top:270.3px;width:10.2px;background:#3b5363"></i><i style="left:20.4px;top:270.3px;width:1.0px;background:#444444"></i><i style="left:22.4px;top:270.3px;width:1.0px;background:#505050"></i><i style="left:12.2px;top:272.3px;width:6.1px;background:#3b5363"></i><i style="left:18.4px;top:272.3px;width:1.0px;background:#444444"></i><i style="left:20.4px;top:272.3px;width:1.0px;background:#505050"></i><i style="left:14.3px;top:274.3px;width:8.2px;background:#5c473d"></i><i style="left:12.2px;top:276.3px;width:1.0px;background:#505050"></i><i style="left:10.2px;top:278.3px;width:1.0px;background:#505050"></i><i style="left:11.2px;top:278.3px;width:1.0px;background:#444444"></i><i style="left:10.2px;top:280.3px;width:10.2px;background:#3b5363"></i><i style="left:20.4px;top:280.3px;width:1.0px;background:#444444"></i><i style="left:22.4px;top:280.3px;width:1.0px;background:#505050"></i><i style="left:12.2px;top:282.3px;width:21.4px;background:#3b5363"></i><i style="left:33.7px;top:282.3px;width:1.0px;background:#444444"></i><i style="left:35.7px;top:282.3px;width:38.8px;background:#5c473d"></i><i style="left:10.2px;top:284.3px;width:1.0px;background:#505050"></i><i style="left:11.2px;top:284.3px;width:1.0px;background:#444444"></i><i style="left:10.2px;top:286.3px;width:6.1px;background:#3b5363"></i><i style="left:16.3px;top:286.3px;width:1.0px;background:#444444"></i><i style="left:18.4px;top:286.3px;width:10.2px;background:#5c473d"></i><i style="left:28.6px;top:286.3px;width:1.0px;background:#444444"></i><i style="left:10.2px;top:288.3px;width:6.1px;background:#3b5363"></i><i style="left:16.3px;top:288.3px;width:1.0px;background:#444444"></i><i style="left:18.4px;top:288.3px;width:6.1px;background:#5c473d"></i><i style="left:24.5px;top:288.3px;width:1.0px;background:#444444"></i><i style="left:10.2px;top:290.3px;width:8.2px;background:#3b5363"></i><i style="left:18.4px;top:290.3px;width:1.0px;background:#444444"></i><i style="left:20.4px;top:290.3px;width:1.0px;background:#505050"></i><i style="left:12.2px;top:292.3px;width:12.2px;background:#3b5363"></i><i style="left:24.5px;top:292.3px;width:1.0px;background:#444444"></i><i style="left:26.5px;top:292.3px;width:3.1px;background:#566050"></i><i style="left:29.6px;top:292.3px;width:1.0px;background:#444444"></i><i style="left:12.2px;top:294.3px;width:6.1px;background:#3b5363"></i><i style="left:18.4px;top:294.3px;width:1.0px;background:#444444"></i><i style="left:20.4px;top:294.3px;width:17.3px;background:#5c473d"></i><i style="left:37.7px;top:294.3px;width:1.0px;background:#444444"></i><i style="left:12.2px;top:296.3px;width:8.2px;background:#3b5363"></i><i style="left:20.4px;top:296.3px;width:1.0px;background:#444444"></i><i style="left:22.4px;top:296.3px;width:1.0px;background:#505050"></i><i style="left:14.3px;top:298.3px;width:6.1px;background:#3b5363"></i><i style="left:20.4px;top:298.3px;width:1.0px;background:#444444"></i><i style="left:22.4px;top:298.3px;width:7.1px;background:#5c473d"></i><i style="left:29.6px;top:298.3px;width:1.0px;background:#444444"></i><i style="left:14.3px;top:300.3px;width:7.1px;background:#3b5363"></i><i style="left:21.4px;top:300.3px;width:1.0px;background:#444444"></i><i style="left:23.5px;top:300.3px;width:1.0px;background:#505050"></i><i style="left:16.3px;top:302.3px;width:6.1px;background:#3b5363"></i><i style="left:22.4px;top:302.3px;width:1.0px;background:#444444"></i><i style="left:24.5px;top:302.3px;width:8.2px;background:#5c473d"></i><i style="left:32.6px;top:302.3px;width:1.0px;background:#444444"></i><i style="left:16.3px;top:304.3px;width:12.2px;background:#3b5363"></i><i style="left:28.6px;top:304.3px;width:1.0px;background:#444444"></i><i style="left:30.6px;top:304.3px;width:1.0px;background:#505050"></i><i style="left:18.4px;top:306.3px;width:6.1px;background:#3b5363"></i><i style="left:24.5px;top:306.3px;width:1.0px;background:#444444"></i><i style="left:26.5px;top:306.3px;width:1.0px;background:#505050"></i><i style="left:20.4px;top:308.3px;width:6.1px;background:#3b5363"></i><i style="left:26.5px;top:308.3px;width:1.0px;background:#444444"></i><i style="left:28.6px;top:308.3px;width:8.2px;background:#5c473d"></i><i style="left:18.4px;top:310.3px;width:1.0px;background:#505050"></i><i style="left:19.4px;top:310.3px;width:1.0px;background:#444444"></i><i style="left:18.4px;top:312.3px;width:6.1px;background:#3b5363"></i><i style="left:24.5px;top:312.3px;width:1.0px;background:#444444"></i><i style="left:26.5px;top:312.3px;width:1.0px;background:#505050"></i><i style="left:20.4px;top:314.3px;width:6.1px;background:#3b5363"></i><i style="left:26.5px;top:314.3px;width:1.0px;background:#444444"></i><i style="left:28.6px;top:314.3px;width:8.2px;background:#5c473d"></i><i style="left:18.4px;top:316.3px;width:1.0px;background:#505050"></i><i style="left:19.4px;top:316.3px;width:1.0px;background:#444444"></i><i style="left:18.4px;top:318.3px;width:6.1px;background:#3b5363"></i><i style="left:24.5px;top:318.3px;width:1.0px;background:#444444"></i><i style="left:26.5px;top:318.3px;width:1.0px;background:#505050"></i><i style="left:20.4px;top:320.3px;width:6.1px;background:#3b5363"></i><i style="left:26.5px;top:320.3px;width:1.0px;background:#444444"></i><i style="left:28.6px;top:320.3px;width:8.2px;background:#5c473d"></i><i style="left:18.4px;top:322.3px;width:1.0px;background:#505050"></i><i style="left:16.3px;top:324.3px;width:1.0px;background:#505050"></i><i style="left:17.3px;top:324.3px;width:1.0px;background:#444444"></i><i style="left:16.3px;top:326.3px;width:10.2px;background:#3b5363"></i><i style="left:26.5px;top:326.3px;width:1.0px;background:#444444"></i><i style="left:28.6px;top:326.3px;width:1.0px;background:#505050"></i><i style="left:18.4px;top:328.3px;width:6.1px;background:#5c473d"></i><i style="left:24.5px;top:328.3px;width:1.0px;background:#444444"></i><i style="left:18.4px;top:330.3px;width:6.1px;background:#5c473d"></i><i style="left:24.5px;top:330.3px;width:1.0px;background:#444444"></i><i style="left:18.4px;top:332.3px;width:6.1px;background:#5c473d"></i><i style="left:16.3px;top:334.3px;width:1.0px;background:#505050"></i><i style="left:14.3px;top:336.3px;width:1.0px;background:#505050"></i><i style="left:12.2px;top:338.3px;width:1.0px;background:#505050"></i><i style="left:10.2px;top:340.3px;width:1.0px;background:#505050"></i><i style="left:8.2px;top:342.3px;width:1.0px;background:#505050"></i><i style="left:6.1px;top:344.3px;width:1.0px;background:#505050"></i><i style="left:4.1px;top:346.3px;width:1.0px;background:#505050"></i><i style="left:2.0px;top:348.3px;width:1.0px;background:#505050"></i><i style="left:3.1px;top:348.3px;width:1.0px;background:#444444"></i><i style="left:2.0px;top:350.3px;width:15.3px;background:#3b5363"></i><i style="left:17.3px;top:350.3px;width:1.0px;background:#444444"></i><i style="left:19.4px;top:350.3px;width:9.2px;background:#5c473d"></i><i style="left:0.0px;top:352.3px;width:1.0px;background:#505050"></i></div>
<div style="left:0px;top:1433px;width:51px;height:31px;background:#3478d1;"></div>
<span style="left:63.60px;top:13.94px;font:400 19.5px/25px 'Liberation Sans', sans-serif;color:#cccccc;letter-spacing:-0.117px;">File</span>
<span style="left:116.90px;top:13.94px;font:400 19.5px/25px 'Liberation Sans', sans-serif;color:#cccccc;letter-spacing:-0.033px;">Edit</span>
<span style="left:174.00px;top:13.94px;font:400 19.5px/25px 'Liberation Sans', sans-serif;color:#cccccc;letter-spacing:-0.050px;">Selection</span>
<span style="left:276.83px;top:13.94px;font:400 19.5px/25px 'Liberation Sans', sans-serif;color:#cccccc;letter-spacing:-0.278px;">View</span>
<span style="left:340.80px;top:13.94px;font:400 19.5px/25px 'Liberation Sans', sans-serif;color:#cccccc;letter-spacing:0.533px;">Go</span>
<span style="left:390.10px;top:13.94px;font:400 19.5px/25px 'Liberation Sans', sans-serif;color:#cccccc;letter-spacing:-0.200px;">Run</span>
<span style="left:448.30px;top:13.94px;font:400 19.5px/25px 'Liberation Sans', sans-serif;color:#cccccc;letter-spacing:-0.043px;">Terminal</span>
<span style="left:544.10px;top:13.94px;font:400 19.5px/25px 'Liberation Sans', sans-serif;color:#cccccc;letter-spacing:0.589px;">Help</span>
<span style="left:1057.97px;top:13.96px;font:400 18px/23px 'Liberation Sans', sans-serif;color:#cccccc;letter-spacing:-0.152px;">[Extension Development Host] Search</span>
<span style="left:101.07px;top:69.88px;font:400 16.5px/21px 'Liberation Sans', sans-serif;color:#cccccc;letter-spacing:-1.867px;">EXPLORER</span>
<span style="left:101.43px;top:111.78px;font:700 16.5px/21px 'Liberation Sans', sans-serif;color:#cccccc;letter-spacing:-0.607px;">NO FOLDER OPENED</span>
<span style="left:102.10px;top:160.04px;font:400 19.5px/25px 'Liberation Sans', sans-serif;color:#cccccc;letter-spacing:0.003px;">You have not yet opened</span>
<span style="left:101.97px;top:186.94px;font:400 19.5px/25px 'Liberation Sans', sans-serif;color:#cccccc;letter-spacing:0.233px;">a folder.</span>
<span style="left:156.77px;top:240.54px;font:400 19.5px/25px 'Liberation Sans', sans-serif;color:#ffffff;letter-spacing:-0.063px;">Open Folder</span>
<span style="left:101.77px;top:293.54px;font:400 19.5px/25px 'Liberation Sans', sans-serif;color:#cccccc;letter-spacing:0.185px;">Opening a folder will</span>
<span style="left:101.77px;top:320.94px;font:400 19.5px/25px 'Liberation Sans', sans-serif;color:#cccccc;letter-spacing:0.020px;">close all currently open</span>
<span style="left:101.77px;top:348.24px;font:400 19.5px/25px 'Liberation Sans', sans-serif;color:#cccccc;letter-spacing:0.003px;">editors. To keep them</span>
<span style="left:101.77px;top:375.54px;font:400 19.5px/25px 'Liberation Sans', sans-serif;color:#cccccc;letter-spacing:0.183px;">open,</span>
<span style="left:155.37px;top:375.54px;font:400 19.5px/25px 'Liberation Sans', sans-serif;color:#4daafc;letter-spacing:0.161px;">add a folder</span>
<span style="left:101.47px;top:402.64px;font:400 19.5px/25px 'Liberation Sans', sans-serif;color:#cccccc;letter-spacing:0.005px;">instead.</span>
<span style="left:102.10px;top:449.14px;font:400 19.5px/25px 'Liberation Sans', sans-serif;color:#cccccc;letter-spacing:-0.336px;">You can clone a</span>
<span style="left:101.47px;top:476.44px;font:400 19.5px/25px 'Liberation Sans', sans-serif;color:#cccccc;letter-spacing:0.180px;">repository locally.</span>
<span style="left:137.00px;top:529.54px;font:400 19.5px/25px 'Liberation Sans', sans-serif;color:#ffffff;letter-spacing:-0.153px;">Clone Repository</span>
<span style="left:102.10px;top:584.14px;font:400 19.5px/25px 'Liberation Sans', sans-serif;color:#cccccc;letter-spacing:0.056px;">To learn more about how</span>
<span style="left:102.27px;top:611.34px;font:400 19.5px/25px 'Liberation Sans', sans-serif;color:#cccccc;letter-spacing:-0.113px;">to use Git and source</span>
<span style="left:101.77px;top:638.44px;font:400 19.5px/25px 'Liberation Sans', sans-serif;color:#cccccc;letter-spacing:-0.055px;">control in VS Code</span>
<span style="left:267.07px;top:638.44px;font:400 19.5px/25px 'Liberation Sans', sans-serif;color:#4daafc;letter-spacing:0.200px;">read</span>
<span style="left:101.77px;top:665.74px;font:400 19.5px/25px 'Liberation Sans', sans-serif;color:#4daafc;letter-spacing:0.081px;">our docs</span>
<span style="left:175.77px;top:665.74px;font:400 19.5px/25px 'Liberation Sans', sans-serif;color:#cccccc;">.</span>
<span style="left:102.10px;top:712.84px;font:400 19.5px/25px 'Liberation Sans', sans-serif;color:#cccccc;letter-spacing:-0.350px;">You can</span>
<span style="left:173.77px;top:712.84px;font:400 19.5px/25px 'Liberation Sans', sans-serif;color:#4daafc;letter-spacing:0.161px;">open a folder</span>
<span style="left:101.77px;top:740.34px;font:400 19.5px/25px 'Liberation Sans', sans-serif;color:#4daafc;letter-spacing:-0.113px;">containing a .NET project</span>
<span style="left:101.77px;top:767.54px;font:400 19.5px/25px 'Liberation Sans', sans-serif;color:#4daafc;letter-spacing:0.387px;">or solution</span>
<span style="left:193.57px;top:767.54px;font:400 19.5px/25px 'Liberation Sans', sans-serif;color:#cccccc;letter-spacing:-0.181px;">, or create a</span>
<span style="left:101.47px;top:794.74px;font:400 19.5px/25px 'Liberation Sans', sans-serif;color:#cccccc;letter-spacing:-0.227px;">new .NET project.</span>
<span style="left:127.70px;top:848.54px;font:400 19.5px/25px 'Liberation Sans', sans-serif;color:#ffffff;letter-spacing:-0.469px;">Create .NET Project</span>
<span style="left:101.53px;top:1339.48px;font:700 16.5px/21px 'Liberation Sans', sans-serif;color:#cccccc;letter-spacing:-0.244px;">OUTLINE</span>
<span style="left:102.03px;top:1372.68px;font:700 16.5px/21px 'Liberation Sans', sans-serif;color:#cccccc;letter-spacing:-0.181px;">TIMELINE</span>
<span style="left:101.93px;top:1405.98px;font:700 16.5px/21px 'Liberation Sans', sans-serif;color:#cccccc;letter-spacing:-0.369px;">PWABUILDER STUDIO</span>
<span style="left:372.47px;top:66.06px;font:700 18px/23px 'Liberation Sans', sans-serif;color:#d8c648;letter-spacing:-1.367px;">{ }</span>
<span style="left:398.30px;top:67.24px;font:400 19.5px/25px 'Liberation Sans', sans-serif;color:#ffffff;letter-spacing:-0.284px;">FlowBuilder-GetConnections-D22C0468-4A77-EF11-A670-7C1E520C644A.json</span>
<span style="left:351.80px;top:109.74px;font:400 19.5px/25px 'Liberation Sans', sans-serif;color:#a9a9a9;letter-spacing:-0.742px;clip-path:inset(0 0 0 1.2px);">Users</span>
<span style="left:423.07px;top:109.74px;font:400 19.5px/25px 'Liberation Sans', sans-serif;color:#a9a9a9;letter-spacing:0.150px;">dwyat</span>
<span style="left:498.20px;top:109.74px;font:400 19.5px/25px 'Liberation Sans', sans-serif;color:#a9a9a9;letter-spacing:0.033px;">Downloads</span>
<span style="left:618.00px;top:109.74px;font:400 19.5px/25px 'Liberation Sans', sans-serif;color:#a9a9a9;letter-spacing:-0.639px;">FlowBuilder_1_0_0_2 (1)</span>
<span style="left:844.83px;top:109.74px;font:400 19.5px/25px 'Liberation Sans', sans-serif;color:#a9a9a9;letter-spacing:0.067px;">Workflows</span>
<span style="left:964.87px;top:110.31px;font:400 17px/22px 'Liberation Sans', sans-serif;color:#d8c648;transform:scaleX(1.5);transform-origin:0 0;">{</span>
<span style="left:974.27px;top:110.31px;font:400 17px/22px 'Liberation Sans', sans-serif;color:#d8c648;transform:scaleX(1.5);transform-origin:0 0;">}</span>
<span style="left:991.00px;top:109.74px;font:400 19.5px/25px 'Liberation Sans', sans-serif;color:#a9a9a9;letter-spacing:-0.284px;">FlowBuilder-GetConnections-D22C0468-4A77-EF11-A670-7C1E520C644A.json</span>
<span style="left:1689.77px;top:110.31px;font:400 17px/22px 'Liberation Sans', sans-serif;color:#a9a9a9;transform:scaleX(1.5);transform-origin:0 0;">{</span>
<span style="left:1700.77px;top:110.31px;font:400 17px/22px 'Liberation Sans', sans-serif;color:#a9a9a9;transform:scaleX(1.5);transform-origin:0 0;">}</span>
<span style="left:1714.93px;top:109.74px;font:400 19.5px/25px 'Liberation Sans', sans-serif;color:#a9a9a9;letter-spacing:0.252px;">properties</span>
<span style="left:1830.37px;top:110.31px;font:400 17px/22px 'Liberation Sans', sans-serif;color:#a9a9a9;transform:scaleX(1.5);transform-origin:0 0;">{</span>
<span style="left:1841.27px;top:110.31px;font:400 17px/22px 'Liberation Sans', sans-serif;color:#a9a9a9;transform:scaleX(1.5);transform-origin:0 0;">}</span>
<span style="left:1855.77px;top:109.74px;font:400 19.5px/25px 'Liberation Sans', sans-serif;color:#a9a9a9;letter-spacing:0.622px;">definition</span>
<span style="left:1964.77px;top:110.31px;font:400 17px/22px 'Liberation Sans', sans-serif;color:#a9a9a9;transform:scaleX(1.5);transform-origin:0 0;">{</span>
<span style="left:1975.67px;top:110.31px;font:400 17px/22px 'Liberation Sans', sans-serif;color:#a9a9a9;transform:scaleX(1.5);transform-origin:0 0;">}</span>
<span style="left:1990.27px;top:109.74px;font:400 19.5px/25px 'Liberation Sans', sans-serif;color:#a9a9a9;letter-spacing:-0.022px;">actions</span>
<span style="left:2077.87px;top:110.31px;font:400 17px/22px 'Liberation Sans', sans-serif;color:#a9a9a9;transform:scaleX(1.5);transform-origin:0 0;">{</span>
<span style="left:2088.77px;top:110.31px;font:400 17px/22px 'Liberation Sans', sans-serif;color:#a9a9a9;transform:scaleX(1.5);transform-origin:0 0;">}</span>
<span style="left:2103.20px;top:109.74px;font:400 19.5px/25px 'Liberation Sans', sans-serif;color:#a9a9a9;letter-spacing:-0.600px;">Response</span>
<span style="left:2212.27px;top:110.31px;font:400 17px/22px 'Liberation Sans', sans-serif;color:#a9a9a9;transform:scaleX(1.5);transform-origin:0 0;">{</span>
<span style="left:2223.17px;top:110.31px;font:400 17px/22px 'Liberation Sans', sans-serif;color:#a9a9a9;transform:scaleX(1.5);transform-origin:0 0;">}</span>
<span style="left:2237.87px;top:109.74px;font:400 19.5px/25px 'Liberation Sans', sans-serif;color:#a9a9a9;letter-spacing:0.380px;">inputs</span>
<span style="left:88.63px;top:1436.76px;font:400 18px/23px 'Liberation Sans', sans-serif;color:#cccccc;">0</span>
<span style="left:129.23px;top:1436.76px;font:400 18px/23px 'Liberation Sans', sans-serif;color:#cccccc;">0</span>
<span style="left:189.33px;top:1436.76px;font:400 18px/23px 'Liberation Sans', sans-serif;color:#cccccc;">0</span>
<span style="left:1701.90px;top:1436.76px;font:400 18px/23px 'Liberation Sans', sans-serif;color:#cccccc;letter-spacing:-0.294px;">Ln 75, Col 39</span>
<span style="left:1828.37px;top:1436.76px;font:400 18px/23px 'Liberation Sans', sans-serif;color:#cccccc;letter-spacing:-0.704px;">Spaces: 2</span>
<span style="left:1925.17px;top:1436.76px;font:400 18px/23px 'Liberation Sans', sans-serif;color:#cccccc;letter-spacing:-0.483px;">UTF-8</span>
<span style="left:1997.17px;top:1436.76px;font:400 18px/23px 'Liberation Sans', sans-serif;color:#cccccc;letter-spacing:-2.400px;">CRLF</span>
<span style="left:2060.47px;top:1435.00px;font:400 17.6px/23px 'Liberation Sans', sans-serif;color:#cccccc;transform:scaleX(1.25);transform-origin:0 0;">{</span>
<span style="left:2069.87px;top:1435.00px;font:400 17.6px/23px 'Liberation Sans', sans-serif;color:#cccccc;transform:scaleX(1.25);transform-origin:0 0;">}</span>
<span style="left:2087.67px;top:1436.76px;font:400 18px/23px 'Liberation Sans', sans-serif;color:#cccccc;letter-spacing:-1.156px;">JSON</span>
<span style="left:2177.37px;top:1436.76px;font:400 18px/23px 'Liberation Sans', sans-serif;color:#cccccc;letter-spacing:-0.533px;">Go Live</span>
<svg width="2304" height="1464" viewBox="0 0 2304 1464" style="left:0;top:0;pointer-events:none" fill="none">
<g transform="translate(13.9 13.9) scale(0.09453)"><path fill="#2670c4" d="M246.94 27.64 194.19 2.24a15.94 15.94 0 0 0-18.18 3.09L2.12 163.26a10.66 10.66 0 0 0 0 15.76l14.1 12.82a10.65 10.65 0 0 0 13.62.61L237.8 34.68c6.98-5.3 17-.32 17 8.44v-.61a16 16 0 0 0-9.06-14.42z"/><path fill="#2f85d9" d="M246.94 228.36 194.19 253.76a15.94 15.94 0 0 1-18.18-3.09L2.12 92.74a10.66 10.66 0 0 1 0-15.76l14.1-12.82a10.65 10.65 0 0 1 13.62-.61L237.8 221.32c6.98 5.3 17 .32 17-8.44v.61a16 16 0 0 1-9.06 14.42z"/><path fill="#46a2f0" d="M194.2 253.76a15.95 15.95 0 0 1-18.2-3.09c5.9 5.9 16 1.72 16-6.63V11.96c0-8.35-10.1-12.53-16-6.63a15.95 15.95 0 0 1 18.2-3.09l52.73 25.36A16 16 0 0 1 256 42.02v171.96a16 16 0 0 1-9.06 14.42z"/></g>
<path stroke="#cccccc" stroke-width="1.6" d="M690.9 26.7H673.0999999999999M680.6999999999999 19.1L673.0999999999999 26.7L680.6999999999999 34.3"/>
<path stroke="#6b6b6b" stroke-width="1.6" d="M711.5 26.7H729.7M722.1 19.1L729.7 26.7L722.1 34.3"/>
<circle cx="1044.3" cy="22.6" r="5.6" stroke="#cccccc" stroke-width="1.5"/><path stroke="#cccccc" stroke-width="1.5" d="M1040.3 26.8L1031.8 35.6"/>
<rect x="1950.25" y="15.95" width="20.30" height="20.10" rx="2.2" stroke="#cccccc" stroke-width="1.5" fill="none"/>
<path fill="#cccccc" d="M1950.6 16.3h8.6v19.4h-8.6z"/>
<rect x="1989.15" y="15.95" width="20.40" height="20.10" rx="2.2" stroke="#cccccc" stroke-width="1.5" fill="none"/>
<path stroke="#cccccc" stroke-width="1.5" d="M1989 30H2010"/>
<rect x="2028.15" y="15.95" width="20.40" height="20.10" rx="2.2" stroke="#cccccc" stroke-width="1.5" fill="none"/>
<path stroke="#cccccc" stroke-width="1.5" d="M2039.1 16V36"/>
<rect x="2068.75" y="18.15" width="7.70" height="16.00" rx="1.5" stroke="#cccccc" stroke-width="1.5" fill="none"/>
<rect x="2081.25" y="18.15" width="6.30" height="5.80" rx="1.5" stroke="#cccccc" stroke-width="1.5" fill="none"/>
<rect x="2081.25" y="28.65" width="6.30" height="5.50" rx="1.5" stroke="#cccccc" stroke-width="1.5" fill="none"/>
<path stroke="#cccccc" stroke-width="1.5" d="M2124.8 24.8H2140.2"/>
<rect x="2194" y="22.6" width="10.6" height="9.4" rx="2.6" stroke="#cccccc" stroke-width="1.5"/>
<path stroke="#cccccc" stroke-width="1.5" d="M2197.2 19.6Q2198.4 18.9 2200 18.9H2203.6Q2208 18.9 2208 23.3V26.2Q2208 28.4 2206.9 29.6"/>
<path stroke="#cccccc" stroke-width="1.5" d="M2263 18.3L2277.8 33M2277.8 18.3L2263 33"/>
<g stroke="#d7d7d7" stroke-width="2.3" stroke-linejoin="round"><path d="M31.7 72H43.4L50.1 78.7V94.6Q50.1 96.8 47.9 96.8H31.7Q29.5 96.8 29.5 94.6V74.2Q29.5 72 31.7 72Z"/><path fill="#d7d7d7" stroke-width="1.2" d="M43.6 72.4V78.5H49.7Z"/><path d="M29.5 81H22.7Q20.5 81 20.5 83.2V103.6Q20.5 105.8 22.7 105.8H38.9Q41.1 105.8 41.1 103.6V96.8"/></g>
<g stroke="#868686" stroke-width="2.4"><circle cx="40.8" cy="155.5" r="11.1"/><path d="M32.6 163.7L20.2 177.8"/></g>
<g stroke="#868686" stroke-width="2.3"><circle cx="28.2" cy="220.4" r="4.6"/><circle cx="28.2" cy="245.5" r="4.6"/><circle cx="44" cy="227.3" r="4.6"/><path d="M28.2 225V240.9"/><path d="M43.2 231.9C42.6 236.6 39.6 236.2 35 236.2C31 236.2 28.6 238 28.2 240.9"/></g>
<g stroke="#868686" stroke-width="2.3" stroke-linejoin="round"><path d="M30.6 303V288.4L53 302.1L38.3 311.6"/><path d="M21.2 314.2C21.2 309 23.8 305.8 27 305.8C30.2 305.8 32.8 309 32.8 314.2C32.8 319.4 30.2 322.4 27 322.4C23.8 322.4 21.2 319.4 21.2 314.2Z"/><path stroke-width="2" d="M21.5 310.8H32.5M18 315H21.2M32.8 315H36M18.4 307.6L22 310.6M35.6 307.6L32 310.6M18.4 322.4L22.4 319M35.6 322.4L31.6 319"/></g>
<g stroke="#868686" stroke-width="2.3" stroke-linejoin="round"><path d="M21.3 367.4H31.8V379.6H44Q46.1 379.6 46.1 381.7V391.7Q46.1 393.8 44 393.8H21.4Q19.3 393.8 19.3 391.7V369.4Q19.3 367.4 21.3 367.4Z"/><path d="M19.3 379.6H31.8V393.8"/><rect x="39.6" y="360.4" width="13.2" height="13.2" rx="2.2"/></g>
<g><path fill="#868686" d="M18.1 464V441.5Q17.6 439.2 19 437.6Q20.8 436 23 437.4Q28.5 432.9 36.1 432.9Q43.7 432.9 49.2 437.4Q51.4 436 53.2 437.6Q54.6 439.2 54.1 441.5V464Z"/><circle cx="27.7" cy="441.8" r="1.6" fill="#181818"/><circle cx="44.4" cy="441.8" r="1.6" fill="#181818"/><ellipse cx="36.1" cy="444.4" rx="3.9" ry="1.8" fill="#181818"/><path fill="#181818" d="M35.4 445.5H36.8L37.6 448.6Q39.4 449.4 40.4 450.2Q38.6 451.9 36.1 451.9Q33.6 451.9 31.8 450.2Q32.8 449.4 34.6 448.6Z"/><path stroke="#3a3a3a" stroke-width="0.8" d="M31.5 447.5L25.5 445.5M31.3 448.6L20.5 447.6M31.5 449.6L20 451M31.8 450.4L22.5 453.5M40.7 447.5L46.7 445.5M40.9 448.6L51.7 447.6M40.7 449.6L52.2 451M40.4 450.4L49.7 453.5"/></g>
<g stroke="#868686" stroke-width="1.35" stroke-linecap="round" stroke-linejoin="round"><path d="M45.87 506.6C44.8 504.2 43.2 503.3 41.3 503.3C39.6 503.3 38.6 504.4 37.8 506L29.8 520.9L33.1 527.4C34.3 529.9 32.4 531.6 29.4 531.6H24.8L18.7 520.9L24.8 510.2H35.5"/><path transform="rotate(180 36 520.95)" d="M45.87 506.6C44.8 504.2 43.2 503.3 41.3 503.3C39.6 503.3 38.6 504.4 37.8 506L29.8 520.9L33.1 527.4C34.3 529.9 32.4 531.6 29.4 531.6H24.8L18.7 520.9L24.8 510.2H35.5"/></g>
<g><rect x="28.55" y="579.5" width="21.1" height="21.1" rx="3.2" stroke="#868686" stroke-width="3"/><path stroke="#868686" stroke-width="3" d="M22.5 583.9V604.2Q22.5 606.5 24.8 606.5H45"/><path fill="#868686" d="M33 584h12v3h-12zM33 588.6h12v3h-12zM33 593.1h5.9v2.9h-5.9z"/></g>
<g stroke="#868686" stroke-width="2.3"><circle cx="36" cy="1323" r="16.9"/><circle cx="36" cy="1319.8" r="7.6"/><path d="M25.4 1336.6C26.8 1331.2 30.6 1327.9 36 1327.9C41.4 1327.9 45.2 1331.2 46.6 1336.6"/></g>
<g stroke="#868686" stroke-width="2.6" stroke-linejoin="round"><path d="M33.23 1378.43L38.77 1378.43L38.96 1382.65L42.64 1384.17L45.76 1381.32L49.68 1385.24L46.83 1388.36L48.35 1392.04L52.57 1392.23L52.57 1397.77L48.35 1397.96L46.83 1401.64L49.68 1404.76L45.76 1408.68L42.64 1405.83L38.96 1407.35L38.77 1411.57L33.23 1411.57L33.04 1407.35L29.36 1405.83L26.24 1408.68L22.32 1404.76L25.17 1401.64L23.65 1397.96L19.43 1397.77L19.43 1392.23L23.65 1392.04L25.17 1388.36L22.32 1385.24L26.24 1381.32L29.36 1384.17L33.04 1382.65Z"/><circle cx="36" cy="1395" r="3.8"/></g>
<circle cx="307.6" cy="79" r="1.7" fill="#cccccc"/>
<circle cx="315.4" cy="79" r="1.7" fill="#cccccc"/>
<circle cx="323.2" cy="79" r="1.7" fill="#cccccc"/>
<path stroke="#cccccc" stroke-width="1.6" d="M79.6 118.2L87.2 125.8L94.8 118.2"/>
<path stroke="#cccccc" stroke-width="1.6" d="M83.6 1341.8999999999999L91 1349.3L83.6 1356.7"/>
<path stroke="#cccccc" stroke-width="1.6" d="M83.6 1374.8999999999999L91 1382.3L83.6 1389.7"/>
<path stroke="#cccccc" stroke-width="1.6" d="M83.6 1407.8999999999999L91 1415.3L83.6 1422.7"/>
<path stroke="#ffffff" stroke-width="1.8" d="M1085 72.6L1098.4 86M1098.4 72.6L1085 86"/>
<rect x="2221.7" y="69.5" width="18.8" height="17.8" rx="2.2" stroke="#cccccc" stroke-width="1.5"/><path stroke="#cccccc" stroke-width="1.5" d="M2231.1 70V87"/>
<circle cx="2262.2" cy="79" r="1.6" fill="#cccccc"/>
<circle cx="2269.6" cy="79" r="1.6" fill="#cccccc"/>
<circle cx="2277" cy="79" r="1.6" fill="#cccccc"/>
<path stroke="#a9a9a9" stroke-width="1.5" d="M407.4 114.9L415.1 122.2L407.4 129.5"/>
<path stroke="#a9a9a9" stroke-width="1.5" d="M483.6 114.9L491.2 122.2L483.6 129.5"/>
<path stroke="#a9a9a9" stroke-width="1.5" d="M603.6 114.9L611.2 122.2L603.6 129.5"/>
<path stroke="#a9a9a9" stroke-width="1.5" d="M829.6 114.9L837.7 122.2L829.6 129.5"/>
<path stroke="#a9a9a9" stroke-width="1.5" d="M943.6 114.9L951.5 122.2L943.6 129.5"/>
<path stroke="#a9a9a9" stroke-width="1.5" d="M1672.2 114.9L1680.2 122.2L1672.2 129.5"/>
<path stroke="#a9a9a9" stroke-width="1.5" d="M1811.6 114.9L1819.6 122.2L1811.6 129.5"/>
<path stroke="#a9a9a9" stroke-width="1.5" d="M1947.4 114.9L1955.2 122.2L1947.4 129.5"/>
<path stroke="#a9a9a9" stroke-width="1.5" d="M2060.4 114.9L2068.2 122.2L2060.4 129.5"/>
<path stroke="#a9a9a9" stroke-width="1.5" d="M2194.9 114.9L2202.6 122.2L2194.9 129.5"/>
<path stroke="#c5c5c5" stroke-width="1.5" d="M433.6 600.7L441.2 608.2L433.6 615.7"/>
<path stroke="#c5c5c5" stroke-width="1.5" d="M433.6 657.7L441.2 665.2L433.6 672.7"/>
<rect x="453.10" y="166.5" width="1.5" height="1264.5" fill="#404040"/>
<rect x="476.20" y="195" width="1.5" height="1236" fill="#404040"/>
<rect x="499.30" y="223.5" width="1.5" height="256.5" fill="#404040"/>
<rect x="499.30" y="537" width="1.5" height="894" fill="#404040"/>
<rect x="522.40" y="252" width="1.5" height="199.5" fill="#404040"/>
<rect x="522.40" y="736.5" width="1.5" height="694.5" fill="#404040"/>
<rect x="545.50" y="309" width="1.5" height="28.5" fill="#404040"/>
<rect x="545.50" y="394.5" width="1.5" height="28.5" fill="#404040"/>
<rect x="545.50" y="765" width="1.5" height="666" fill="#404040"/>
<rect x="568.60" y="793.5" width="1.5" height="85.5" fill="#404040"/>
<rect x="568.60" y="936" width="1.5" height="28.5" fill="#404040"/>
<rect x="591.70" y="822" width="1.5" height="28.5" fill="#404040"/>
<rect x="591.70" y="1164" width="1.5" height="267" fill="#404040"/>
<rect x="568.60" y="1078.5" width="1.5" height="352.5" fill="#707070"/>
<rect x="614.80" y="1221" width="1.5" height="210" fill="#404040"/>
<rect x="637.90" y="1278" width="1.5" height="153" fill="#404040"/>
<rect x="661.00" y="1306.5" width="1.5" height="28.5" fill="#404040"/>
<rect x="661.00" y="1392" width="1.5" height="28.5" fill="#404040"/>
<path stroke="#ffffff" stroke-width="1.6" d="M18.8 1444.2L25 1449.9L19 1455.8M32 1438.4L25.8 1444.2L32 1449.9"/>
<g stroke="#cccccc" stroke-width="1.5"><circle cx="73.45" cy="1447.25" r="8.7"/><path d="M69.4 1443.2L77.5 1451.3M77.5 1443.2L69.4 1451.3"/></g>
<g stroke="#cccccc" stroke-width="1.5" stroke-linejoin="round"><path d="M114.1 1438.9L122.5 1454.6H105.7Z"/><path stroke-width="1.8" d="M114.1 1444.4V1450M114.1 1451.4V1453.2"/></g>
<g stroke="#cccccc" stroke-width="1.5" stroke-linecap="round"><circle cx="174.6" cy="1444" r="1.6"/><path d="M174.6 1445.8L168.6 1456.2M174.6 1445.8L180.6 1456.2M170.6 1452.9H178.6"/><path d="M171.84 1440.71A4.3 4.3 0 0 0 171.84 1447.29M177.36 1440.71A4.3 4.3 0 0 1 177.36 1447.29M169.38 1438.20A7.8 7.8 0 0 0 169.38 1449.80M179.82 1438.20A7.8 7.8 0 0 1 179.82 1449.80"/></g>
<g stroke="#cccccc" stroke-width="1.35" stroke-linecap="round"><circle cx="2162.4" cy="1446.4" r="1.5" fill="#cccccc"/><path stroke-width="3.4" stroke-linecap="butt" d="M2162.4 1447.6000000000001V1456.6"/><path d="M2159.5 1449.8000000000002A4.4 4.4 0 1 1 2165.3 1449.8000000000002"/><path d="M2157.8 1452.9A7.9 7.9 0 1 1 2167.0 1452.9"/></g>
<g stroke="#cccccc" stroke-width="1.4" stroke-linejoin="round"><path d="M2263.5 1453.4L2265.5 1449.4V1445.2C2265.5 1441.2 2267.8 1438.7 2271 1438.7C2274.2 1438.7 2276.5 1441.2 2276.5 1445.2V1449.4L2278.5 1453.4Z"/><path d="M2268.8 1453.8C2268.8 1455.4 2269.8 1456.3 2271 1456.3C2272.2 1456.3 2273.2 1455.4 2273.2 1453.8"/></g>
<path fill="#ffffff" stroke="#111111" stroke-width="1" stroke-linejoin="miter" d="M334.2 181.3L343.4 173.4V179.2H358V173.4L367.2 181.3L358 189.2V183.4H343.4V189.2Z"/>
</svg>
</div></body></html>
